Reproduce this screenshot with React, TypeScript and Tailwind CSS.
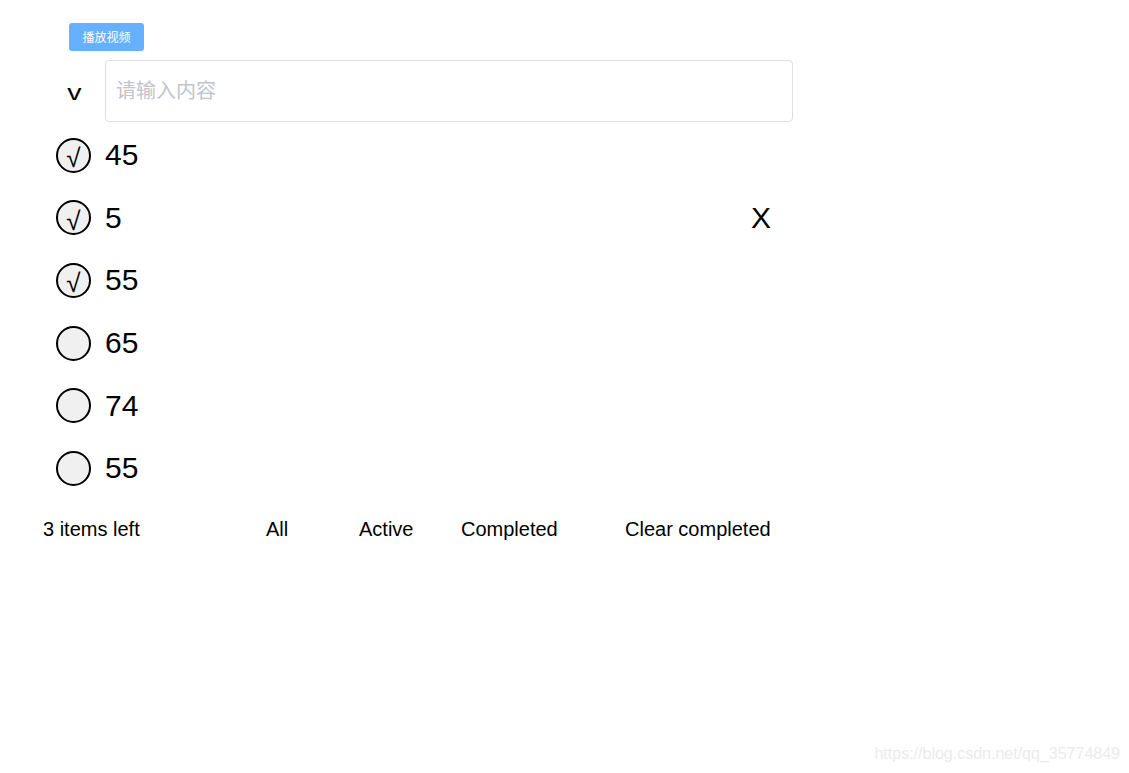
import React from "react";

const items = [
  { text: "45", done: true, showX: false },
  { text: "5", done: true, showX: true },
  { text: "55", done: true, showX: false },
  { text: "65", done: false, showX: false },
  { text: "74", done: false, showX: false },
  { text: "55", done: false, showX: false },
];

export default function App() {
  return (
    <div
      className="relative min-h-screen bg-white text-black"
      style={{ fontFamily: '"Liberation Sans", "Noto Sans CJK SC", sans-serif' }}
    >
      <div className="pl-[69px] pt-[23px]">
        <button className="flex h-[28px] w-[75px] items-center justify-center rounded-[3px] bg-[#66b1ff] pt-[1px] text-[12px] text-white">
          播放视频
        </button>
      </div>

      <div className="mt-[9px] flex h-[62px] items-center">
        <div className="flex w-[105px] justify-center pl-[44px] pt-[3px] text-[22px] leading-none">
          <span className="inline-block scale-x-[1.3]">v</span>
        </div>
        <input
          className="h-[62px] w-[688px] rounded-[4px] border border-[#dcdfe6] bg-white pl-[10px] text-[20px] outline-none placeholder:text-[#c0c4cc]"
          placeholder="请输入内容"
        />
      </div>

      <ul className="mt-[2px] w-[793px]">
        {items.map((it, i) => (
          <li key={i} className="flex h-[62.6px] items-center pl-[56px] pr-[22px]">
            <div className="flex h-[35px] w-[35px] shrink-0 items-center justify-center rounded-full border-2 border-black bg-[#f0f0f0]">
              {it.done && (
                <span className="pt-[6px] text-[26px] leading-none">√</span>
              )}
            </div>
            <span className="ml-[14px] text-[30px] leading-none">{it.text}</span>
            {it.showX && <span className="ml-auto text-[30px] leading-none">X</span>}
          </li>
        ))}
      </ul>

      <div className="flex h-[58px] items-center pl-[43px] text-[20px]">
        <span className="w-[223px]">3 items left</span>
        <span className="w-[93px]">All</span>
        <span className="w-[102px]">Active</span>
        <span className="w-[164px]">Completed</span>
        <span>Clear completed</span>
      </div>

      <div className="absolute bottom-[10px] right-[9px] text-[16px] leading-[18px] text-[#ebebeb]">
        https://blog.csdn.net/qq_35774849
      </div>
    </div>
  );
}
